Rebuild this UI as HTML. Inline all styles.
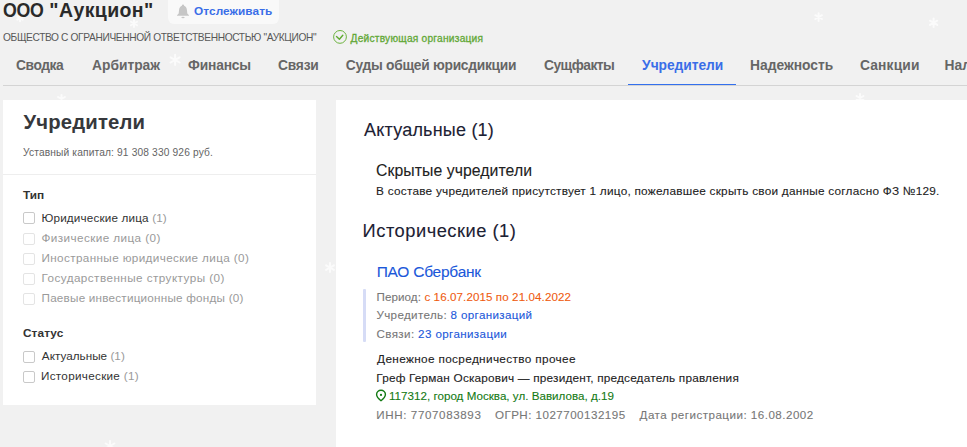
<!DOCTYPE html>
<html><head><meta charset="utf-8">
<style>
*{margin:0;padding:0;box-sizing:border-box}
html,body{width:967px;height:447px;overflow:hidden;background:#f1f1f1;font-family:"Liberation Sans",sans-serif}
.a{position:absolute;white-space:nowrap}
.c{color:#9a9a9a}
.cb{position:absolute;left:23px;width:12px;height:12px;border:1px solid #c9c9c9;border-radius:2px;background:#fff}
.cb.d{border-color:#e4e4e4}

</style></head><body>
<svg class="a" style="left:0;top:0" width="967" height="447"><g stroke="#fbfbfb" stroke-width="2" stroke-linecap="round"><path d="M20.00 14.80L20.00 21.20M22.77 16.40L17.23 19.60M22.77 19.60L17.23 16.40"/><path d="M134.00 20.00L134.00 27.00M137.03 21.75L130.97 25.25M137.03 25.25L130.97 21.75"/><path d="M175.10 54.70L175.10 65.10M179.60 57.30L170.60 62.50M179.60 62.50L170.60 57.30"/><path d="M61.50 95.00L61.50 103.00M64.96 97.00L58.04 101.00M64.96 101.00L58.04 97.00"/><path d="M818.60 13.30L818.60 20.90M821.89 15.20L815.31 19.00M821.89 19.00L815.31 15.20"/><path d="M933.60 18.60L933.60 27.00M937.24 20.70L929.96 24.90M937.24 24.90L929.96 20.70"/><path d="M860.00 94.00L860.00 102.00M863.46 96.00L856.54 100.00M863.46 100.00L856.54 96.00"/><path d="M110.00 441.00L110.00 451.00M114.33 443.50L105.67 448.50M114.33 448.50L105.67 443.50"/><path d="M330.00 263.10L330.00 272.10M333.90 265.35L326.10 269.85M333.90 269.85L326.10 265.35"/></g></svg>
<div class="a" style="left:168px;top:-6px;width:111px;height:30px;background:#f9f9f9;border-radius:6px"></div>
<svg class="a" style="left:176px;top:4px" width="14" height="16" viewBox="0 0 14 16"><circle cx="7" cy="1.6" r="1.1" fill="#c6c6c6"/><path d="M7 1.6C9.6 1.6 10.8 3.8 11 6.5L11.3 9.6L13 11.3V11.8H1V11.3L2.7 9.6L3 6.5C3.2 3.8 4.4 1.6 7 1.6z" fill="#c6c6c6"/><ellipse cx="7" cy="13.5" rx="1.7" ry="0.7" fill="#c6c6c6"/></svg>
<svg class="a" style="left:332px;top:29px" width="16" height="16" viewBox="0 0 16 16"><circle cx="8" cy="7.9" r="6.4" fill="none" stroke="#6cb33e" stroke-width="1"/><path d="M4.5 7.6l2.9 2.6 3.4-4" fill="none" stroke="#5faa30" stroke-width="1.4" stroke-linecap="round" stroke-linejoin="round"/></svg>
<div class="a" style="left:3px;top:85px;width:964px;height:1px;background:#d4d4d4"></div>
<div class="a" style="left:628px;top:83.5px;width:108px;height:1.5px;background:#3370ee"></div>
<div class="a" style="left:3px;top:100px;width:313px;height:305px;background:#fff"></div>
<div class="a" style="left:336px;top:100px;width:631px;height:347px;background:#fff"></div>
<div class="a" style="left:3px;top:174px;width:313px;height:1px;background:#eee"></div>
<div class="cb" style="top:212px"></div>
<div class="cb d" style="top:233px"></div>
<div class="cb d" style="top:253px"></div>
<div class="cb d" style="top:273px"></div>
<div class="cb d" style="top:293px"></div>
<div class="cb" style="top:351px"></div>
<div class="cb" style="top:371px"></div>
<div class="a" style="left:363px;top:289px;width:3px;height:53px;background:#d6dcf6;border-radius:1px"></div>
<svg class="a" style="left:375px;top:389px" width="12" height="14" viewBox="0 0 12 14"><path d="M6 11.8C6 11.8 1.6 8.4 1.6 5.6A4.4 4.3 0 0 1 10.4 5.6C10.4 8.4 6 11.8 6 11.8z" fill="none" stroke="#137a13" stroke-width="1.4" stroke-linejoin="round"/><circle cx="6" cy="5.9" r="1.1" fill="#137a13"/></svg>

<div class="a" id="title" style="left:3.00px;top:1.49px;font-size:19.50px;line-height:19.50px;font-weight:bold;color:#2a2a2a;letter-spacing:-0.270px;transform:scaleX(0.9100);transform-origin:0 0">ООО</div>
<div class="a" id="title2" style="left:49.30px;top:1.49px;font-size:19.50px;line-height:19.50px;font-weight:bold;color:#2a2a2a;letter-spacing:0.394px">"Аукцион"</div>
<div class="a" id="btntxt" style="left:194.00px;top:6.01px;font-size:11.80px;line-height:11.80px;font-weight:bold;color:#3a6ee8;letter-spacing:0.090px">Отслеживать</div>
<div class="a" id="sub" style="left:3.00px;top:33.36px;font-size:10.20px;line-height:10.20px;font-weight:normal;color:#585858;letter-spacing:-0.367px">ОБЩЕСТВО С ОГРАНИЧЕННОЙ ОТВЕТСТВЕННОСТЬЮ "АУКЦИОН"</div>
<div class="a" id="status" style="left:350.50px;top:33.56px;font-size:10.20px;line-height:10.20px;font-weight:normal;color:#62a836;letter-spacing:0.229px;-webkit-text-stroke:0.3px currentColor">Действующая организация</div>
<div class="a" id="n1" style="left:16.10px;top:59.32px;font-size:13.80px;line-height:13.80px;font-weight:bold;color:#666666;letter-spacing:-0.450px">Сводка</div>
<div class="a" id="n2" style="left:92.00px;top:59.32px;font-size:13.80px;line-height:13.80px;font-weight:bold;color:#666666;letter-spacing:0.000px">Арбитраж</div>
<div class="a" id="n3" style="left:188.00px;top:59.32px;font-size:13.80px;line-height:13.80px;font-weight:bold;color:#666666;letter-spacing:-0.150px">Финансы</div>
<div class="a" id="n4" style="left:278.00px;top:59.32px;font-size:13.80px;line-height:13.80px;font-weight:bold;color:#666666;letter-spacing:-0.225px">Связи</div>
<div class="a" id="n5" style="left:345.70px;top:59.32px;font-size:13.80px;line-height:13.80px;font-weight:bold;color:#666666;letter-spacing:-0.270px">Суды общей юрисдикции</div>
<div class="a" id="n6" style="left:544.00px;top:59.32px;font-size:13.80px;line-height:13.80px;font-weight:bold;color:#666666;letter-spacing:-0.514px">Сущфакты</div>
<div class="a" id="n7" style="left:642.10px;top:59.32px;font-size:13.80px;line-height:13.80px;font-weight:bold;color:#3a6ee8;letter-spacing:-0.050px">Учредители</div>
<div class="a" id="n8" style="left:750.00px;top:59.32px;font-size:13.80px;line-height:13.80px;font-weight:bold;color:#666666;letter-spacing:0.000px">Надежность</div>
<div class="a" id="n9" style="left:860.00px;top:59.32px;font-size:13.80px;line-height:13.80px;font-weight:bold;color:#666666;letter-spacing:0.150px">Санкции</div>
<div class="a" id="n10" style="left:944.60px;top:59.32px;font-size:13.80px;line-height:13.80px;font-weight:bold;color:#666666;letter-spacing:0.000px">Налоги</div>
<div class="a" id="lh" style="left:23.60px;top:111.81px;font-size:20.30px;line-height:20.30px;font-weight:bold;color:#36383c;letter-spacing:0.150px">Учредители</div>
<div class="a" id="cap" style="left:23.00px;top:148.36px;font-size:10.20px;line-height:10.20px;font-weight:normal;color:#646464;letter-spacing:0.150px">Уставный капитал: 91 308 330 926 руб.</div>
<div class="a" id="g1" style="left:23.00px;top:190.21px;font-size:11.80px;line-height:11.80px;font-weight:bold;color:#333;letter-spacing:0.000px">Тип</div>
<div class="a" id="r1" style="left:41.50px;top:211.69px;font-size:11.70px;line-height:11.70px;font-weight:normal;color:#333;letter-spacing:0.166px">Юридические лица <span class="c">(1)</span></div>
<div class="a" id="r2" style="left:41.50px;top:231.79px;font-size:11.70px;line-height:11.70px;font-weight:normal;color:#9a9a9a;letter-spacing:0.425px">Физические лица (0)</div>
<div class="a" id="r3" style="left:41.50px;top:251.99px;font-size:11.70px;line-height:11.70px;font-weight:normal;color:#9a9a9a;letter-spacing:0.377px">Иностранные юридические лица (0)</div>
<div class="a" id="r4" style="left:41.50px;top:272.19px;font-size:11.70px;line-height:11.70px;font-weight:normal;color:#9a9a9a;letter-spacing:0.450px">Государственные структуры (0)</div>
<div class="a" id="r5" style="left:41.50px;top:292.39px;font-size:11.70px;line-height:11.70px;font-weight:normal;color:#9a9a9a;letter-spacing:0.225px">Паевые инвестиционные фонды (0)</div>
<div class="a" id="g2" style="left:23.00px;top:328.11px;font-size:11.80px;line-height:11.80px;font-weight:bold;color:#333;letter-spacing:0.090px">Статус</div>
<div class="a" id="s1" style="left:41.80px;top:349.99px;font-size:11.70px;line-height:11.70px;font-weight:normal;color:#333;letter-spacing:0.035px">Актуальные <span class="c">(1)</span></div>
<div class="a" id="s2" style="left:41.00px;top:369.89px;font-size:11.70px;line-height:11.70px;font-weight:normal;color:#333;letter-spacing:0.300px">Исторические <span class="c">(1)</span></div>
<div class="a" id="h2a" style="left:364.00px;top:121.36px;font-size:18.00px;line-height:18.00px;font-weight:normal;color:#1c2133;letter-spacing:0.208px;-webkit-text-stroke:0.1px currentColor">Актуальные (1)</div>
<div class="a" id="hid" style="left:376.10px;top:162.92px;font-size:15.80px;line-height:15.80px;font-weight:normal;color:#222;letter-spacing:0.053px;-webkit-text-stroke:0.1px currentColor">Скрытые учредители</div>
<div class="a" id="desc" style="left:376.10px;top:185.91px;font-size:11.80px;line-height:11.80px;font-weight:normal;color:#222;letter-spacing:0.238px;-webkit-text-stroke:0.1px currentColor">В составе учредителей присутствует 1 лицо, пожелавшее скрыть свои данные согласно ФЗ №129.</div>
<div class="a" id="h2b" style="left:362.60px;top:221.61px;font-size:18.30px;line-height:18.30px;font-weight:normal;color:#1c2133;letter-spacing:0.510px;-webkit-text-stroke:0.1px currentColor">Исторические (1)</div>
<div class="a" id="pao" style="left:376.70px;top:264.08px;font-size:15.50px;line-height:15.50px;font-weight:normal;color:#1b58da;letter-spacing:-0.245px;-webkit-text-stroke:0.1px currentColor">ПАО Сбербанк</div>
<div class="a" id="per" style="left:376.50px;top:291.28px;font-size:11.60px;line-height:11.60px;font-weight:normal;color:#777;letter-spacing:0.095px;-webkit-text-stroke:0.1px currentColor">Период: <span style="color:#ef5c10">с 16.07.2015 по 21.04.2022</span></div>
<div class="a" id="uch" style="left:376.50px;top:309.48px;font-size:11.60px;line-height:11.60px;font-weight:normal;color:#777;letter-spacing:0.356px;-webkit-text-stroke:0.1px currentColor">Учредитель: <span style="color:#1b58da">8 организаций</span></div>
<div class="a" id="svz" style="left:376.50px;top:328.08px;font-size:11.60px;line-height:11.60px;font-weight:normal;color:#777;letter-spacing:0.383px;-webkit-text-stroke:0.1px currentColor">Связи: <span style="color:#1b58da">23 организации</span></div>
<div class="a" id="den" style="left:377.10px;top:354.41px;font-size:11.80px;line-height:11.80px;font-weight:normal;color:#222;letter-spacing:0.341px;-webkit-text-stroke:0.1px currentColor">Денежное посредничество прочее</div>
<div class="a" id="gref" style="left:376.30px;top:373.21px;font-size:11.80px;line-height:11.80px;font-weight:normal;color:#222;letter-spacing:0.185px;-webkit-text-stroke:0.1px currentColor">Греф Герман Оскарович — президент, председатель правления</div>
<div class="a" id="addr" style="left:389.00px;top:390.28px;font-size:11.60px;line-height:11.60px;font-weight:normal;color:#137a13;letter-spacing:0.023px;-webkit-text-stroke:0.1px currentColor">117312, город Москва, ул. Вавилова, д.19</div>
<div class="a" id="inn1" style="left:376.30px;top:408.88px;font-size:11.60px;line-height:11.60px;font-weight:normal;color:#777;letter-spacing:0.611px;-webkit-text-stroke:0.1px currentColor">ИНН: 7707083893</div>
<div class="a" id="inn2" style="left:494.90px;top:408.88px;font-size:11.60px;line-height:11.60px;font-weight:normal;color:#777;letter-spacing:0.475px;-webkit-text-stroke:0.1px currentColor">ОГРН: 1027700132195</div>
<div class="a" id="inn3" style="left:639.60px;top:408.88px;font-size:11.60px;line-height:11.60px;font-weight:normal;color:#777;letter-spacing:0.483px;-webkit-text-stroke:0.1px currentColor">Дата регистрации: 16.08.2002</div>
</body></html>
